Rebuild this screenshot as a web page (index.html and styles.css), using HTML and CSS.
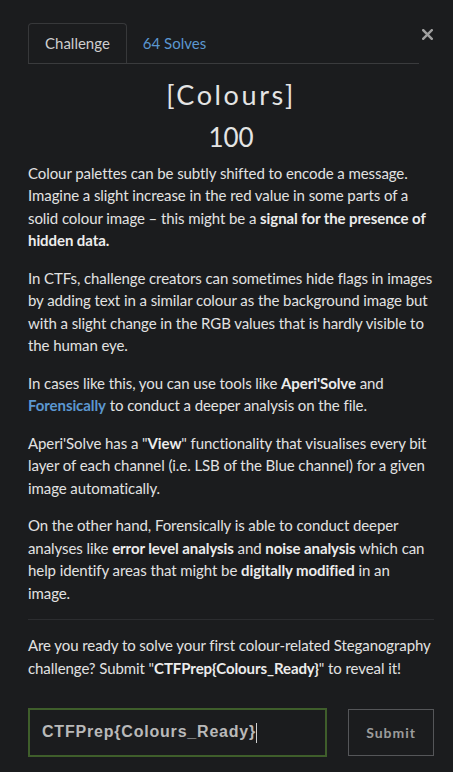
FILE: index.html
```html
<!DOCTYPE html>
<html lang="en">
<head>
<meta charset="utf-8">
<title>Colours</title>
<link rel="stylesheet" href="styles.css">
</head>
<body>
<div class="modal">
  <div class="head">
    <ul class="tabs">
      <li class="tab active">Challenge</li>
      <li class="tab link">64 Solves</li>
    </ul>
    <button class="close" aria-label="Close">
      <svg width="11" height="11" viewBox="0 0 11 11"><path d="M1.2 1.2 L9.8 9.8 M9.8 1.2 L1.2 9.8" stroke="#a0a0a0" stroke-width="2.4" stroke-linecap="square"/></svg>
    </button>
  </div>
  <h2 class="title">[Colours]</h2>
  <h3 class="value">100</h3>
  <div class="desc">
    <p>Colour palettes can be subtly shifted to encode a message. Imagine a slight increase in the red value in some parts of a solid colour image – this might be a <strong>signal for the presence of hidden data.</strong></p>
    <p>In CTFs, challenge creators can sometimes hide flags in images by adding text in a similar colour as the background image but with a slight change in the RGB values that is hardly visible to the human eye.</p>
    <p>In cases like this, you can use tools like <strong>Aperi'Solve</strong> and <a class="blue" href="#">Forensically</a> to conduct a deeper analysis on the file.</p>
    <p>Aperi'Solve has a "<strong>View</strong>" functionality that visualises every bit layer of each channel (i.e. LSB of the Blue channel) for a given image automatically.</p>
    <p>On the other hand, Forensically is able to conduct deeper analyses like <strong>error level analysis</strong> and <strong>noise analysis</strong> which can help identify areas that might be <strong>digitally modified</strong> in an image.</p>
  </div>
  <hr class="sep">
  <p class="final">Are you ready to solve your first colour-related Steganography challenge? Submit "<strong>CTFPrep{Colours_Ready}</strong>" to reveal it!</p>
  <form class="submit-row">
    <div class="flag-input">CTFPrep{Colours_Ready}<span class="caret"></span></div>
    <button type="button" class="submit">Submit</button>
  </form>
</div>
</body>
</html>
```
FILE: styles.css
```css
html, body {
  margin: 0;
  padding: 0;
  background: #1b1c1e;
}
body {
  font-family: Lato, "Noto Sans", sans-serif;
  color: #e2e2e2;
  font-size: 15px;
  line-height: 22.5px;
}
.modal {
  padding: 23px 19px 0 28px;
}
.head {
  display: flex;
  align-items: flex-start;
}
.tabs {
  flex: 1;
  display: flex;
  list-style: none;
  margin: 0 2px 0 0;
  padding: 0;
  border-bottom: 1px solid #3a3b3d;
}
.tab {
  padding: 8px 16px;
  border: 1px solid transparent;
  border-bottom: 0;
  border-radius: 4px 4px 0 0;
  color: #cfcfcf;
}
.tab.active {
  border-color: #37383a;
}
.tab.link {
  color: #5b97d0;
  padding-left: 15px;
}
.close {
  width: 13px;
  margin-top: 6px;
  padding: 0;
  border: 0;
  background: none;
  display: flex;
  justify-content: center;
}
.title {
  margin: 15px 0 0;
  text-align: center;
  font-weight: 400;
  font-size: 27px;
  line-height: 32px;
  letter-spacing: 2.6px;
  color: #e4e4e4;
}
.value {
  margin: 10px 0 0;
  text-align: center;
  font-weight: 400;
  font-size: 26px;
  line-height: 32px;
  color: #e4e4e4;
}
.desc {
  margin-top: 9px;
  letter-spacing: -0.08px;
}
p {
  margin: 0 0 15px;
}
strong {
  font-weight: 700;
  color: #ececec;
}
.blue {
  color: #5b97d0;
  font-weight: 700;
  text-decoration: none;
}
.sep {
  margin: 1px 0 14px;
  border: 0;
  border-top: 1px solid #2c2d30;
  height: 0;
}
.final {
  margin: 0;
  letter-spacing: -0.08px;
}
.submit-row {
  display: flex;
  gap: 21px;
  margin-top: 29px;
  align-items: center;
}
.flag-input {
  box-sizing: border-box;
  width: 300px;
  height: 49px;
  border: 2px solid #3f5e2b;
  padding: 0 0 0 12px;
  display: flex;
  align-items: center;
  font-family: "Liberation Sans", Arial, sans-serif;
  font-weight: 700;
  font-size: 16px;
  letter-spacing: 0.8px;
  color: #b9b9b9;
}
.caret {
  display: inline-block;
  width: 1px;
  height: 20px;
  background: #d0d0d0;
  margin-left: 0;
}
.submit {
  box-sizing: border-box;
  width: 86px;
  height: 47px;
  background: transparent;
  border: 1px solid #555659;
  font-family: Lato, sans-serif;
  font-weight: 700;
  font-size: 14px;
  letter-spacing: 1px;
  color: #9c9c9c;
  padding: 0;
}
```
